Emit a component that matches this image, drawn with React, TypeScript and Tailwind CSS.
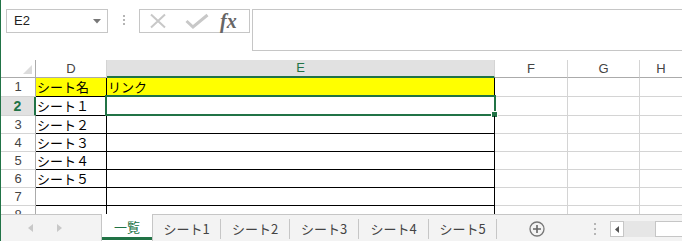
import React from "react";

type Row = { n: number; d: string; e: string; h: string };

const rows: Row[] = [
  { n: 1, d: "シート名", e: "リンク", h: "h-[19px]" },
  { n: 2, d: "シート１", e: "", h: "h-[19px]" },
  { n: 3, d: "シート２", e: "", h: "h-[18px]" },
  { n: 4, d: "シート３", e: "", h: "h-[18px]" },
  { n: 5, d: "シート４", e: "", h: "h-[18px]" },
  { n: 6, d: "シート５", e: "", h: "h-[18px]" },
  { n: 7, d: "", e: "", h: "h-[18px]" },
  { n: 8, d: "", e: "", h: "h-[18px]" },
];

const tabs = [
  { name: "シート1", w: "w-[68px]" },
  { name: "シート2", w: "w-[69px]" },
  { name: "シート3", w: "w-[69px]" },
  { name: "シート4", w: "w-[70px]" },
  { name: "シート5", w: "w-[68px]" },
];

const cellFont = { fontFamily: '"Noto Sans CJK JP", "Noto Sans", sans-serif' };
const hdrFont = { fontFamily: '"Liberation Sans", Arial, sans-serif' };

export default function App() {
  return (
    <div className="w-[682px] h-[241px] overflow-hidden bg-white border-l border-[#217346] flex flex-col">
      {/* Toolbar */}
      <div className="h-[60px] shrink-0 flex items-start pt-[9px]">
        <div
          className="shrink-0 ml-[5px] w-[102px] h-[24px] border border-[#c6c6c6] flex items-center justify-between pl-[7px] pr-[6px] text-[13px] text-[#222]"
          style={hdrFont}
        >
          <span>E2</span>
          <svg width="8" height="5" viewBox="0 0 8 5">
            <path d="M0 0 H8 L4 4.5 Z" fill="#777" />
          </svg>
        </div>
        <div className="shrink-0 ml-[15px] mt-[6px] flex flex-col gap-[2px]">
          <div className="w-[2px] h-[2px] bg-[#b5b5b5]" />
          <div className="w-[2px] h-[2px] bg-[#b5b5b5]" />
          <div className="w-[2px] h-[2px] bg-[#b5b5b5]" />
        </div>
        <div className="shrink-0 ml-[14px] w-[111px] h-[24px] border border-[#c6c6c6] flex items-center">
          <svg className="ml-[9px]" width="18" height="16" viewBox="0 0 18 16">
            <path d="M2 1.5 L16 14.5 M16 1.5 L2 14.5" stroke="#c8c8c8" strokeWidth="2" />
          </svg>
          <svg className="ml-[18px]" width="24" height="16" viewBox="0 0 24 16">
            <path d="M1.5 8 L8 14 L22.5 2" stroke="#c8c8c8" strokeWidth="3" fill="none" />
          </svg>
          <span
            className="ml-[11px] text-[20px] italic font-bold text-[#666] leading-none"
            style={{ fontFamily: '"Liberation Serif", "Times New Roman", serif' }}
          >
            fx
          </span>
        </div>
        <div className="ml-[2px] flex-1 h-[42px] border border-r-0 border-[#c6c6c6]" />
      </div>

      {/* Grid */}
      <div className="h-[154px] shrink-0 overflow-hidden" style={hdrFont}>
        {/* Column headers */}
        <div className="flex h-[18px] text-[13px] text-[#444]">
          <div className="shrink-0 w-[35px] border-r border-b border-[#ababab] flex items-end justify-end pr-[3px] pb-[3px]">
            <svg width="9" height="9" viewBox="0 0 9 9">
              <path d="M9 0 V9 H0 Z" fill="#dcdcdc" />
            </svg>
          </div>
          <div className="shrink-0 w-[71px] border-r border-r-[#d4d4d4] border-b border-b-[#ababab] flex items-center justify-center">
            D
          </div>
          <div className="shrink-0 w-[388px] bg-[#e1e1e1] border-r border-r-[#d4d4d4] border-b-2 border-b-[#217346] flex items-center justify-center text-[#217346]">
            E
          </div>
          <div className="shrink-0 w-[73px] border-r border-r-[#d4d4d4] border-b border-b-[#ababab] flex items-center justify-center">
            F
          </div>
          <div className="shrink-0 w-[72px] border-r border-r-[#d4d4d4] border-b border-b-[#ababab] flex items-center justify-center">
            G
          </div>
          <div className="flex-1 border-b border-b-[#ababab] flex items-center justify-center">H</div>
        </div>

        {rows.map((r) => {
          const sel = r.n === 2;
          const yellow = r.n === 1;
          return (
            <div key={r.n} className={`flex ${r.h}`}>
              <div
                className={
                  sel
                    ? "shrink-0 w-[35px] bg-[#e1e1e1] border-r-2 border-r-[#217346] border-b border-b-[#d4d4d4] flex items-center justify-center text-[14px] font-bold text-[#217346]"
                    : "shrink-0 w-[35px] border-r border-r-[#ababab] border-b border-b-[#d4d4d4] flex items-center justify-center text-[13px] text-[#444]"
                }
              >
                {r.n}
              </div>
              <div
                className={`shrink-0 w-[71px] border-r border-b border-black flex items-center pl-[1px] text-[13px] text-black ${
                  yellow ? "bg-[#ffff00]" : ""
                }`}
                style={cellFont}
              >
                {r.d}
              </div>
              <div
                className={`shrink-0 relative w-[388px] border-r border-b border-black flex items-center pl-[1px] text-[13px] text-black ${
                  yellow ? "bg-[#ffff00]" : ""
                }`}
                style={cellFont}
              >
                {r.e}
                {sel && (
                  <>
                    <div className="absolute left-[-2px] top-[-2px] w-[391px] h-[21px] border-2 border-[#217346] pointer-events-none" />
                    <div className="absolute left-[384px] top-[14px] w-[7px] h-[7px] bg-[#217346] border border-white" />
                  </>
                )}
              </div>
              <div className="shrink-0 w-[73px] border-r border-b border-[#d4d4d4]" />
              <div className="shrink-0 w-[72px] border-r border-b border-[#d4d4d4]" />
              <div className="flex-1 border-b border-[#d4d4d4]" />
            </div>
          );
        })}
      </div>

      {/* Sheet tabs */}
      <div className="h-[27px] shrink-0 bg-[#f3f3f3] flex overflow-hidden" style={cellFont}>
        <div className="shrink-0 w-[100px] border-t border-[#c6c6c6] flex items-center">
          <svg className="ml-[27px]" width="5" height="8" viewBox="0 0 5 8">
            <path d="M5 0 V8 L0 4 Z" fill="#c8c8c8" />
          </svg>
          <svg className="ml-[24px]" width="5" height="8" viewBox="0 0 5 8">
            <path d="M0 0 V8 L5 4 Z" fill="#c8c8c8" />
          </svg>
        </div>
        <div className="shrink-0 w-[52px] bg-white border-l border-r border-[#c6c6c6] flex flex-col">
          <div className="flex-1 flex items-center justify-center text-[13px] text-[#217346] pt-[2px]">一覧</div>
          <div className="h-[3px] bg-[#217346] mb-[1px]" />
        </div>
        <div className="flex-1 min-w-0 border-t border-[#c6c6c6] flex items-center overflow-hidden">
          {tabs.map((t) => (
            <div
              key={t.name}
              className={`shrink-0 ${t.w} h-[20px] mt-[2px] border-r border-[#c6c6c6] flex items-center justify-center text-[13px] text-[#444]`}
            >
              {t.name}
            </div>
          ))}
          <svg className="shrink-0 ml-[32px] mt-[2px]" width="16" height="16" viewBox="0 0 16 16">
            <circle cx="8" cy="8" r="7" fill="none" stroke="#777" strokeWidth="1.3" />
            <path d="M8 4 V12 M4 8 H12" stroke="#666" strokeWidth="1.6" />
          </svg>
          <div className="shrink-0 ml-[49px] mt-[2px] flex flex-col gap-[3px]">
            <div className="w-[2px] h-[2px] bg-[#b5b5b5]" />
            <div className="w-[2px] h-[2px] bg-[#b5b5b5]" />
            <div className="w-[2px] h-[2px] bg-[#b5b5b5]" />
          </div>
          <div className="shrink-0 ml-[14px] mt-[2px] flex h-[16px]">
            <div className="shrink-0 w-[14px] h-[16px] bg-white border border-[#c6c6c6] flex items-center justify-center">
              <svg width="4" height="7" viewBox="0 0 4 7">
                <path d="M4 0 V7 L0 3.5 Z" fill="#555" />
              </svg>
            </div>
            <div className="shrink-0 w-[31px] bg-[#e6e6e6]" />
            <div className="shrink-0 w-[40px] bg-white border border-[#c6c6c6]" />
          </div>
        </div>
      </div>
    </div>
  );
}
